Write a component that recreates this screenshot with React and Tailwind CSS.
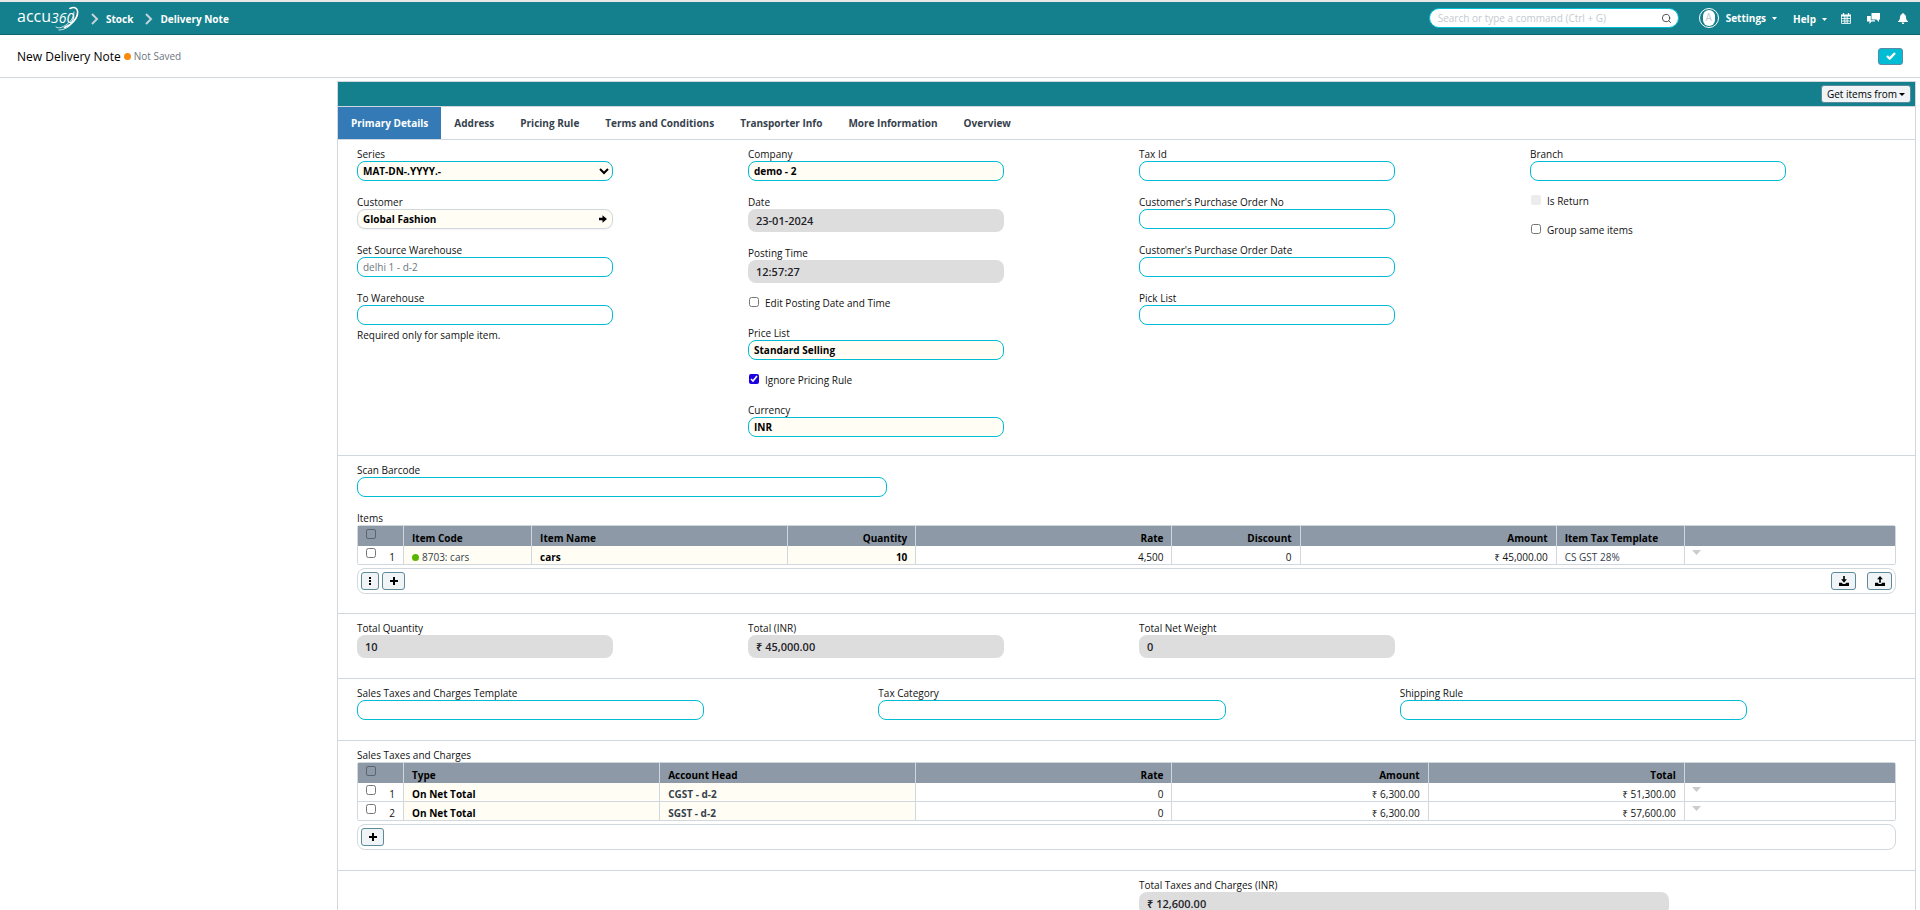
import React from 'react';
import { Search } from 'lucide-react';

const Chevron = () => (
    <svg viewBox="0 0 8 12" className="w-2 h-3" fill="none" stroke="#c3d3da" strokeWidth="2">
        <path d="M1 1l5 5-5 5" />
    </svg>
);

const Logo = () => (
    <a href="#" className="relative flex items-center h-8 w-[62px] text-white leading-none font-light">
        <span className="text-[16px] pb-1 font-normal">accu</span>
        <span className="text-[14px] italic font-normal">360</span>
        <svg viewBox="0 0 24 26" className="absolute right-0 top-1 w-6 h-[26px]" fill="none" stroke="#fff" strokeLinecap="round">
            <path d="M15 2.500c4-2 7-1 7.500 2.500 1 7-6 14-13 16.500" strokeWidth="1.600" />
            <path d="M19 6c0 7-6 13-13 15.500-2 .5-3.500.5-5-.5" strokeWidth=".8" />
            <path d="M4 24c5 0 11-3 15-9" strokeWidth=".8" />
        </svg>
    </a>
);

const Triangle = ({ className }) => (
    <svg viewBox="0 0 8 4" preserveAspectRatio="none" className={className} fill="currentColor">
        <path d="M0 0h8L4 4z" />
    </svg>
);

const CalendarIcon = () => (
    <svg viewBox="0 0 10 11" className="w-[10px] h-[11px]" fill="none" stroke="currentColor">
        <path d="M2.500 0v2M7.500 0v2" strokeWidth="1.300" />
        <path d="M0 2.500h10" strokeWidth="2" />
        <path d="M.5 3v7.500h9V3M3.300 3v7.500M5 3v7.500M6.700 3v7.500M0 5.500h10M0 8h10" strokeWidth=".8" />
    </svg>
);

const ChatIcon = () => (
    <svg viewBox="0 0 13 11" className="w-[13px] h-[11px]" fill="currentColor">
        <path d="M4.500 0H13v6.500h-1V9L9.500 6.500h-5z" />
        <path d="M0 3h3.800v4.200H8v1.300H4.500L2.500 11V8.500H0z" />
    </svg>
);

const BellIcon = () => (
    <svg viewBox="0 0 10 11" className="w-[10px] h-[11px]" fill="currentColor">
        <path d="M5 0c.6 0 .8.4.8.9C7.600 1.400 8 3 8 4.500 8 6.500 9 7.500 10 8.500V9H0v-.5c1-1 2-2 2-4C2 3 2.400 1.400 4.200.9 4.200.4 4.400 0 5 0zM3.700 9.500h2.600C6.200 10.500 5.700 11 5 11s-1.200-.5-1.300-1.500z" />
    </svg>
);

const PlusIcon = () => (
    <svg viewBox="0 0 8 8" className="w-2 h-2" stroke="currentColor" strokeWidth="2">
        <path d="M4 0v8M0 4h8" />
    </svg>
);

const DotsIcon = () => (
    <svg viewBox="0 0 2 8" className="w-[2px] h-2" fill="currentColor">
        <path d="M0 0h2v2H0zM0 3h2v2H0zM0 6h2v2H0z" />
    </svg>
);

const ArrowIcon = () => (
    <svg viewBox="0 0 8 8" className="w-2 h-2 text-black" fill="currentColor">
        <path d="M0 2.800h3.500V.3L8 4 3.500 7.700V5.200H0z" />
    </svg>
);

const Tray = ({ up }) => (
    <svg viewBox="0 0 12 12" className="w-[10px] h-[10px]" fill="currentColor">
        {up ? <path d="M6 0l3.500 4H7v4H5V4H2.500z" /> : <path d="M5 0h2v4h2.500L6 8 2.500 4H5z" />}
        <path d="M0 8h3.500l1 1.500h3L8.500 8H12v4H0z" />
    </svg>
);

const Field = ({ id, label, value = '', kind = 'text', hint }) => {
    const base = 'block w-[70%] rounded-lg';
    const look = {
        text: 'h-5 px-[5px] border border-[#00bcd4] bg-white text-[#6c7680]',
        required: 'h-5 px-[5px] border border-[#00bcd4] bg-[#fffdf4] font-bold text-black',
        readonly: 'h-[23px] px-2 bg-[#dddddd] font-semibold text-[11px] text-[#1f2329]'
    };
    return (
        <div className="mb-[13px]">
            <label htmlFor={id} className="block h-[15px] leading-[17px]">{label}</label>
            <input id={id} type="text" defaultValue={value} readOnly={kind === 'readonly'} className={`${base} ${look[kind]}`} />
            {hint && <p className="mt-0.5 leading-[17px]">{hint}</p>}
        </div>
    );
};

const Check = ({ id, label, checked, disabled }) => (
    <div className="h-[29px] flex items-start pl-px pt-px">
        <input id={id} type="checkbox" defaultChecked={checked} disabled={disabled} className="w-[10px] h-[10px] accent-[#1b00e0] disabled:appearance-none disabled:bg-[#ececec] disabled:rounded-[2px]" />
        <label htmlFor={id} className="pl-[6px] leading-3">{label}</label>
    </div>
);

const Section = ({ className = 'pb-[5px]', children }) => (
    <section className={`flex border-b border-[#d1d8dd] pl-1 pr-[9px] pt-1.5 ${className}`}>{children}</section>
);

const Column = ({ className = 'w-1/4', children }) => (
    <div className={`pl-[15px] pr-[10px] ${className}`}>{children}</div>
);

const iconButton = 'h-[18px] flex items-center justify-center rounded-[3px] border border-[#5b8a9b] bg-[#f0f4f7] text-black';

const Grid = ({ name, columns, rows, children }) => (
    <div className="mb-[13px]">
        <div className="h-[15px] leading-[17px]">{name}</div>
        <table className="w-full table-fixed border-separate border-spacing-0 border-t border-x border-[#d1d8dd] rounded-[3px]">
            <thead>
                <tr className="bg-[#8d99a6]">
                    <th className="w-[46px] p-0 border-r border-[#d1d8dd] h-5 text-left">
                        <input type="checkbox" aria-label="Select all" className="block ml-2 mb-1 w-[10px] h-[10px] appearance-none border border-[#5c656e] rounded-[2px]" />
                    </th>
                    {columns.map((col) => (
                        <th key={col.label} className={`${col.width} ${col.right ? 'text-right' : 'text-left'} h-5 p-0 px-2 pt-1 leading-[15px] border-r border-[#d1d8dd] font-bold text-black`}>{col.label}</th>
                    ))}
                    <th className="p-0"></th>
                </tr>
            </thead>
            <tbody>
                {rows.map((row, i) => (
                    <tr key={i}>
                        <td className="h-[19px] p-0 border-r border-b border-[#d1d8dd]">
                            <div className="flex items-center justify-between pl-2 pr-2">
                                <input type="checkbox" aria-label={`Select row ${i + 1}`} className="mb-1 w-[10px] h-[10px]" />
                                <span className="leading-[14px] pt-1">{i + 1}</span>
                            </div>
                        </td>
                        {row.map((cell, j) => (
                            <td key={j} className={`${columns[j].right ? 'text-right' : 'text-left'} ${columns[j].required ? 'bg-[#fffdf4]' : ''} h-[19px] p-0 px-2 pt-1 leading-[14px] border-r border-b border-[#d1d8dd]`}>{cell}</td>
                        ))}
                        <td className="p-0 pl-[7px] border-b border-[#d1d8dd] align-top">
                            <Triangle className="mt-1 w-[9px] h-[5px] text-[#cccccc]" />
                        </td>
                    </tr>
                ))}
            </tbody>
        </table>
        <div className="mt-[3px] h-[26px] flex items-center border border-[#d1d8dd] rounded-lg px-[3px]">{children}</div>
    </div>
);

const tabs = ['Primary Details', 'Address', 'Pricing Rule', 'Terms and Conditions', 'Transporter Info', 'More Information', 'Overview'];

const itemColumns = [
    { label: 'Item Code', width: 'w-1/12', required: true },
    { label: 'Item Name', width: 'w-1/6', required: true },
    { label: 'Quantity', width: 'w-1/12', required: true, right: true },
    { label: 'Rate', width: 'w-1/6', right: true },
    { label: 'Discount', width: 'w-1/12', right: true },
    { label: 'Amount', width: 'w-1/6', right: true },
    { label: 'Item Tax Template', width: 'w-1/12' }
];

const itemRows = [[
    <span className="flex items-center gap-[3px] text-[#36414c]"><i className="w-[7px] h-[7px] rounded-full bg-[#5ab500]"></i>8703: cars</span>,
    <b className="text-black">cars</b>,
    <b className="text-black">10</b>,
    '4,500',
    '0',
    '₹ 45,000.00',
    <span className="text-[#36414c]">CS GST 28%</span>
]];

const taxColumns = [
    { label: 'Type', width: 'w-1/6', required: true },
    { label: 'Account Head', width: 'w-1/6', required: true },
    { label: 'Rate', width: 'w-1/6', right: true },
    { label: 'Amount', width: 'w-1/6', right: true },
    { label: 'Total', width: 'w-1/6', right: true }
];

const taxRows = [
    [<b className="text-black">On Net Total</b>, <b className="text-[#36414c]">CGST - d-2</b>, '0', '₹ 6,300.00', '₹ 51,300.00'],
    [<b className="text-black">On Net Total</b>, <b className="text-[#36414c]">SGST - d-2</b>, '0', '₹ 6,300.00', '₹ 57,600.00']
];

const App = () => {
    return (
        <div className="h-screen overflow-hidden bg-white text-[10px] leading-[15px] text-[#111] font-['Open_Sans','Noto_Sans',sans-serif]">
            <header className="h-[35px] flex items-center border-t-2 border-t-[#e8e8e8] border-b border-b-[#0d6570] bg-[#15808d] pl-[17px] pr-3 text-white font-bold">
                <Logo />
                <nav className="flex items-center pl-3 pt-0.5">
                    <Chevron />
                    <a href="#" className="pl-[7px] pr-3">Stock</a>
                    <Chevron />
                    <a href="#" className="pl-[7px]">Delivery Note</a>
                </nav>
                <div className="ml-auto flex items-center">
                    <div className="flex items-center w-[250px] h-5 rounded-full border border-[#00bcd4] bg-white pl-2 pr-[6px]">
                        <input type="text" aria-label="Search" placeholder="Search or type a command (Ctrl + G)" className="flex-1 min-w-0 font-normal placeholder-[#c3cad0] outline-none" />
                        <Search className="w-[11px] h-[11px] text-[#444]" />
                    </div>
                    <span className="ml-5 w-5 h-5 rounded-full border border-white flex items-center justify-center">
                        <span className="w-3 h-4 rounded-full bg-white text-[#c3cad0] text-center font-normal">A</span>
                    </span>
                    <button type="button" className="ml-[7px] flex items-center gap-[6px]">Settings <Triangle className="w-[5px] h-[3px]" /></button>
                    <button type="button" className="ml-4 pt-0.5 flex items-center gap-[6px]">Help <Triangle className="w-[5px] h-[3px]" /></button>
                    <button type="button" aria-label="Calendar" className="ml-[14px]"><CalendarIcon /></button>
                    <button type="button" aria-label="Chat" className="ml-4"><ChatIcon /></button>
                    <button type="button" aria-label="Notifications" className="ml-[18px]"><BellIcon /></button>
                </div>
            </header>

            <div className="h-[43px] flex items-center border-b border-[#d1d8dd] pl-[17px] pr-[17px]">
                <h1 className="text-[12px] text-black">New Delivery Note</h1>
                <span className="ml-[3px] w-[7px] h-[7px] rounded-full bg-[#f98b0c]"></span>
                <span className="ml-[3px] text-[#6c7680]">Not Saved</span>
                <button type="button" aria-label="Save" className="ml-auto w-[25px] h-[17px] flex items-center justify-center rounded-[3px] border border-[#5b8aa5] bg-[#00bcd4] text-white">
                    <svg viewBox="0 0 10 8" className="w-[10px] h-2" fill="none" stroke="currentColor" strokeWidth="2.400">
                        <path d="M1 4l2.700 2.600L9 1" />
                    </svg>
                </button>
            </div>

            <main className="mt-[3px] ml-[337px] mr-1 border border-[#d1d8dd]">
                <div className="h-6 flex items-center justify-end bg-[#15808d] pr-1">
                    <button type="button" className="h-[18px] px-[5px] flex items-center gap-[2px] rounded-[3px] border border-[#5b8a9b] bg-[#f0f4f7] text-black">Get items from <Triangle className="w-[6px] h-[3px]" /></button>
                </div>
                <div role="tablist" className="flex border-y border-[#d1d8dd] h-[34px]">
                    {tabs.map((tab, i) => (
                        <button key={tab} type="button" role="tab" aria-selected={i === 0} className={`px-[13px] font-bold ${i === 0 ? 'bg-[#337ab7] text-white' : 'text-[#36414c]'}`}>{tab}</button>
                    ))}
                </div>

                <Section>
                    <Column>
                        <div className="mb-[13px]">
                            <label htmlFor="series" className="block h-[15px] leading-[17px]">Series</label>
                            <select id="series" className="block w-[70%] h-5 pl-px pr-[5px] rounded-lg border border-[#00bcd4] bg-[#fffdf4] font-bold text-black">
                                <option>MAT-DN-.YYYY.-</option>
                            </select>
                        </div>
                        <div className="mb-[13px]">
                            <label htmlFor="customer" className="block h-[15px] leading-[17px]">Customer</label>
                            <div className="w-[70%] h-5 flex items-center rounded-lg border border-[#d1d8dd] bg-[#fffdf4] pl-[5px] pr-[5px] shadow-xs">
                                <input id="customer" type="text" defaultValue="Global Fashion" className="flex-1 min-w-0 font-bold text-black outline-none" />
                                <ArrowIcon />
                            </div>
                        </div>
                        <Field id="source" label="Set Source Warehouse" value="delhi 1 - d-2" />
                        <Field id="target" label="To Warehouse" hint="Required only for sample item." />
                    </Column>
                    <Column>
                        <Field id="company" label="Company" value="demo - 2" kind="required" />
                        <Field id="date" label="Date" value="23-01-2024" kind="readonly" />
                        <Field id="time" label="Posting Time" value="12:57:27" kind="readonly" />
                        <Check id="edit" label="Edit Posting Date and Time" />
                        <Field id="prices" label="Price List" value="Standard Selling" kind="required" />
                        <Check id="ignore" label="Ignore Pricing Rule" checked />
                        <Field id="currency" label="Currency" value="INR" kind="required" />
                    </Column>
                    <Column>
                        <Field id="taxid" label="Tax Id" />
                        <Field id="pono" label="Customer's Purchase Order No" />
                        <Field id="podate" label="Customer's Purchase Order Date" />
                        <Field id="picklist" label="Pick List" />
                    </Column>
                    <Column>
                        <Field id="branch" label="Branch" />
                        <Check id="return" label="Is Return" disabled />
                        <Check id="group" label="Group same items" />
                    </Column>
                </Section>

                <Section className="pb-1.5 flex-wrap">
                    <Column className="w-1/2">
                        <Field id="barcode" label="Scan Barcode" />
                    </Column>
                    <Column className="w-full">
                        <Grid name="Items" columns={itemColumns} rows={itemRows}>
                            <button type="button" aria-label="More" className={`${iconButton} w-[18px]`}><DotsIcon /></button>
                            <button type="button" aria-label="Add row" className={`${iconButton} w-[23px] ml-[3px]`}><PlusIcon /></button>
                            <button type="button" aria-label="Download" className={`${iconButton} w-[25px] ml-auto`}><Tray /></button>
                            <button type="button" aria-label="Upload" className={`${iconButton} w-[25px] ml-[11px]`}><Tray up /></button>
                        </Grid>
                    </Column>
                </Section>

                <Section className="pb-[7px]">
                    <Column><Field id="qty" label="Total Quantity" value="10" kind="readonly" /></Column>
                    <Column><Field id="total" label="Total (INR)" value="₹ 45,000.00" kind="readonly" /></Column>
                    <Column><Field id="weight" label="Total Net Weight" value="0" kind="readonly" /></Column>
                </Section>

                <Section className="pb-[7px]">
                    <Column className="w-1/3"><Field id="template" label="Sales Taxes and Charges Template" /></Column>
                    <Column className="w-1/3"><Field id="category" label="Tax Category" /></Column>
                    <Column className="w-1/3"><Field id="shipping" label="Shipping Rule" /></Column>
                </Section>

                <Section className="pb-[7px]">
                    <Column className="w-full">
                        <Grid name="Sales Taxes and Charges" columns={taxColumns} rows={taxRows}>
                            <button type="button" aria-label="Add tax row" className={`${iconButton} w-[23px]`}><PlusIcon /></button>
                        </Grid>
                    </Column>
                </Section>

                <Section>
                    <Column className="w-1/2 ml-[50%]">
                        <Field id="taxes" label="Total Taxes and Charges (INR)" value="₹ 12,600.00" kind="readonly" />
                    </Column>
                </Section>
            </main>
        </div>
    );
};

export default App;
